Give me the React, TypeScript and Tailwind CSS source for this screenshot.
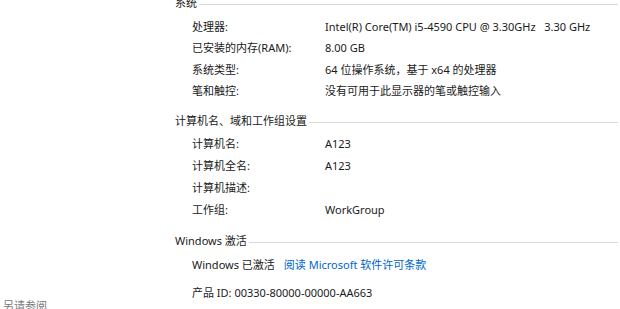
const font = { fontFamily: '"Segoe UI", "Noto Sans", "Noto Sans CJK SC", sans-serif' }

function SectionHeader({ title, className = "" }: { title: string; className?: string }) {
  return (
    <div className={`flex items-center h-4 ${className}`}>
      <span className="text-[11px] leading-4 whitespace-nowrap">{title}</span>
      <div className="flex-1 h-px bg-[#d9d9d9] ml-[2px] mt-[3px]" />
    </div>
  )
}

function Row({ label, value, h = "h-[22px]" }: { label: string; value?: React.ReactNode; h?: string }) {
  return (
    <div className={`flex items-center pl-[17px] ${h} text-[11px]`}>
      <span className="w-[133px] shrink-0 whitespace-nowrap">{label}</span>
      <span className="whitespace-nowrap">{value}</span>
    </div>
  )
}

export default function App() {
  return (
    <div className="w-[620px] h-[309px] overflow-hidden bg-white text-[#1a1a1a]" style={font}>
      <div className="flex">
        {/* 左侧导航 */}
        <div className="w-[175px] shrink-0 flex flex-col justify-end">
          <span className="pl-[3px] mb-[2px] text-[11px] leading-4 text-[#7a7a7a] whitespace-nowrap">另请参阅</span>
        </div>

        <div className="flex-1 mt-[-5px] pb-[12px] pr-[2px]">
          {/* 系统 */}
          <SectionHeader title="系统" className="mb-[5px]" />
          <Row h="h-[21.5px]" label="处理器:" value={<>Intel(R) Core(TM) i5-4590 CPU @ 3.30GHz&nbsp;&nbsp;&nbsp;3.30 GHz</>} />
          <Row h="h-[21.5px]" label="已安装的内存(RAM):" value="8.00 GB" />
          <Row h="h-[21.5px]" label="系统类型:" value="64 位操作系统，基于 x64 的处理器" />
          <Row h="h-[21.5px]" label="笔和触控:" value="没有可用于此显示器的笔或触控输入" />

          {/* 计算机名 */}
          <SectionHeader title="计算机名、域和工作组设置" className="mt-[11px] mb-[4px]" />
          <Row label="计算机名:" value="A123" />
          <Row label="计算机全名:" value="A123" />
          <Row label="计算机描述:" />
          <Row label="工作组:" value="WorkGroup" />

          {/* Windows 激活 */}
          <SectionHeader title="Windows 激活" className="mt-[12px] mb-[5px]" />
          <div className="flex items-center pl-[17px] h-[22px] text-[11px] whitespace-nowrap">
            <span>Windows 已激活</span>
            <a className="ml-[9px] text-[#0066cc]">阅读 Microsoft 软件许可条款</a>
          </div>
          <div className="flex items-center pl-[17px] h-[22px] mt-[6px] text-[11px] whitespace-nowrap">
            产品 ID: 00330-80000-00000-AA663
          </div>
        </div>
      </div>
    </div>
  )
}
